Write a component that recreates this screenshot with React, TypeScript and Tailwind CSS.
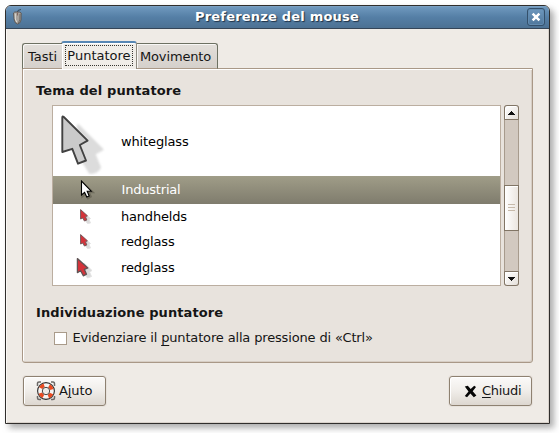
import React from 'react';

const cursorRows = [
  { name: 'whiteglass', kind: 'glass', height: 'h-[70px]', label: 'pt-[2px] tracking-[-0.13px]' },
  { name: 'Industrial', kind: 'industrial', height: 'h-[28px]', label: 'pl-[0.5px] tracking-[-0.2px]' },
  { name: 'handhelds', kind: 'small', height: 'h-[25px]', label: 'tracking-[-0.2px]' },
  { name: 'redglass', kind: 'small', height: 'h-[25px]', label: 'tracking-[-0.13px]' },
  { name: 'redglass', kind: 'medium', height: 'h-[27px]', label: 'tracking-[-0.13px]' },
];

function Cursor({ kind }: { kind: string }) {
  if (kind === 'glass') {
    return (
      <svg width="52" height="66" viewBox="0 0 52 66" className="mt-[2px] ml-[5px] shrink-0">
        <path d="M20 16L44.5 40.5L36.5 45L42 58.5Q40 64 32 64L25 53L18 48Z" fill="#dcdcdc" stroke="#dcdcdc" strokeWidth="2" strokeLinejoin="round" style={{ filter: 'blur(1px)' }} />
        <path d="M4.3 8.5Q4.3 6.8 5.8 8L29.6 31.6L21.8 36L28 51.5L20 54.7L14.3 39.8L4.3 43Z" fill="#cacaca" stroke="#424242" strokeWidth="1.9" strokeLinejoin="round" />
      </svg>
    );
  }
  if (kind === 'industrial') {
    return (
      <svg width="16" height="22" viewBox="0 0 16 22" className="ml-[26px] shrink-0">
        <path d="M3.5 4V17L6.5 14.5L9 19L11.5 17.5L9.5 13H13Z" fill="none" stroke="#555244" strokeOpacity=".5" strokeWidth="2.5" />
        <path d="M2.5 2.2V16L5.6 13.4L7.8 18L10.2 17L8.2 12.2H12.2Z" fill="#fff" stroke="#000" strokeWidth="1.1" />
      </svg>
    );
  }
  if (kind === 'small') {
    return (
      <svg width="16" height="18" viewBox="0 0 16 18" className="-mt-[2px] ml-[25px] shrink-0">
        <path d="M6 6L12.5 11.5L11 12.5L12.5 16L9.5 16.5L6 12Z" fill="#dadada" stroke="#e3e3e3" />
        <path d="M2.6 2.6V12L4.9 11L6.4 14L8.8 13L7.5 9.8L9.4 8.8Z" fill="#d5333a" stroke="#77595b" strokeWidth="1" strokeLinejoin="round" />
      </svg>
    );
  }
  return (
    <svg width="20" height="24" viewBox="0 0 20 24" className="ml-[22px] shrink-0">
      <path d="M9 7L17 14.5L14.5 16L16.5 20.5L12.5 22L8 16Z" fill="#dadada" stroke="#e3e3e3" />
      <path d="M2.4 2.6V16.6L5.6 14.8L8.3 19.8L11.5 18.2L9.4 13.4L12.8 12Z" fill="#d5333a" stroke="#5f5354" strokeWidth="1.3" strokeLinejoin="round" />
    </svg>
  );
}

function TitleBar() {
  return (
    <header className="flex h-[23px] items-center border-b border-[#354557] bg-linear-to-b from-[#729bc0] via-[#557fa6] to-[#4c7193] shadow-[inset_0_1px_0_#7ba0c2]">
      <svg width="12" height="16" viewBox="0 0 12 16" className="ml-[6px]">
        <path d="M5.5 3Q5 1 9 .5" fill="none" stroke="#33414e" strokeWidth=".9" />
        <path d="M1.5 4Q2 2.7 5 3Q8.6 2.7 9.2 4L9 11Q8 15 5.5 15Q3 14.5 2.2 11Z" fill="#a8a39d" stroke="#5b5550" strokeWidth=".9" />
        <path d="M3.3 4.5V10L4.7 13" stroke="#e2ded7" fill="none" />
        <path d="M5.5 3.5V6.5" stroke="#85685f" strokeWidth="1" />
        <path d="M8 5Q8.5 11 6.5 14" stroke="#6e6a66" fill="none" />
      </svg>
      <h1 className="flex-1 pl-[3px] text-center text-[13px] leading-[22px] font-bold tracking-[0.2px] whitespace-nowrap text-white [text-shadow:1px_1px_1px_#1e3044]">Preferenze del mouse</h1>
      <button className="mr-[4px] flex h-[18px] w-[18px] items-center justify-center rounded-[3px] border border-[#34506b] bg-linear-to-b from-[#6e98be] to-[#4f779c] shadow-[inset_0_0_0_1px_#628bb0]">
        <svg width="10" height="10" viewBox="0 0 10 10">
          <path d="M1.6 1.6L8.4 8.4M8.4 1.6L1.6 8.4" stroke="#fff" strokeWidth="2.5" />
        </svg>
      </button>
    </header>
  );
}

const tabBase = 'relative flex whitespace-nowrap border-t border-[#6d7162]';

function Tabs() {
  return (
    <nav className="relative z-10 flex h-[28px] items-end">
      <div className={`${tabBase} h-[26px] w-[40px] justify-center rounded-tl-[3px] border-l border-b border-b-[#a99887] bg-linear-to-b from-[#e3dfda] to-[#d5d0cb] pt-[4px] leading-[18px] shadow-[inset_1px_1px_0_#f8f7f5]`}>Tasti</div>
      <div className="-ml-px flex h-[28px] w-[76px] justify-center rounded-t-[3px] border-x border-t-[2px] border-x-[#8e8a80] border-t-[#5787b4] bg-[#f0ede8] pt-[2px] shadow-[inset_1px_1px_0_#fff]">
        <span className="flex h-[21px] w-[68px] justify-center border border-dotted border-[#353530] leading-[20px]">Puntatore</span>
      </div>
      <div className={`${tabBase} h-[26px] w-[81px] rounded-tr-[3px] border-r border-b border-b-[#a99887] bg-linear-to-b from-[#e3dfda] to-[#d5d0cb] pt-[4px] pl-[3px] leading-[18px] tracking-[-0.15px] shadow-[inset_1px_1px_0_#f8f7f5]`}>Movimento</div>
    </nav>
  );
}

function ScrollBar() {
  return (
    <div className="flex h-[181px] w-[15px] flex-col rounded-[3px] border-x border-[#a79b8d] bg-[#d2c9c0]">
      <div className="-mx-px flex h-[15px] shrink-0 items-center justify-center rounded-t-[3px] border border-[#817565] bg-linear-to-br from-white to-[#e5e0da] shadow-[inset_1px_1px_0_#fff]">
        <svg width="7" height="4" viewBox="0 0 7 4" shapeRendering="crispEdges"><path d="M3 0H4V1H5V2H6V3H7V4H0V3H1V2H2V1H3Z" fill="#111" /></svg>
      </div>
      <div className="h-[65px] shrink-0" />
      <div className="-mx-px flex h-[46px] shrink-0 flex-col items-center justify-center gap-[2px] border border-[#817565] bg-linear-to-r from-white to-[#ebe6e0] pb-px shadow-[inset_1px_1px_0_#fff]">
        <i className="h-px w-[7px] bg-[#c7baaa]" />
        <i className="h-px w-[7px] bg-[#c7baaa]" />
        <i className="h-px w-[7px] bg-[#c7baaa]" />
      </div>
      <div className="flex-1" />
      <div className="-mx-px flex h-[15px] shrink-0 items-center justify-center rounded-b-[3px] border border-[#817565] bg-linear-to-br from-white to-[#e5e0da] shadow-[inset_1px_1px_0_#fff]">
        <svg width="7" height="4" viewBox="0 0 7 4" shapeRendering="crispEdges"><path d="M0 0H7V1H6V2H5V3H4V4H3V3H2V2H1V1H0Z" fill="#111" /></svg>
      </div>
    </div>
  );
}

function HelpIcon() {
  return (
    <svg width="20" height="20" viewBox="0 0 20 20">
      <path d="M1.5 5V2Q1.5 1 3 1H5M15 1H17Q18.5 1 18.5 3V5M18.5 15V17Q18.5 18.5 17 18.5H15M5 18.5H3Q1.5 18.5 1.5 17V15" fill="none" stroke="#6b6967" strokeWidth="1.5" />
      <circle cx="10" cy="10" r="8.4" fill="#f6f4f2" stroke="#2d2d2d" strokeWidth="1.1" />
      <circle cx="10" cy="10" r="6" fill="none" stroke="#ea4a20" strokeWidth="3.8" strokeDasharray="4.4 5.025" transform="rotate(24 10 10)" />
      <circle cx="10" cy="10" r="3.7" fill="#efebe7" stroke="#4a4846" strokeWidth="1" />
    </svg>
  );
}

const buttonStyle = 'flex h-[30px] w-[83px] items-center rounded-[3px] border border-[#8e8171] bg-linear-to-b from-[#fbfaf9] via-[#f0ede9] to-[#ddd7d0] whitespace-nowrap shadow-[inset_1px_1px_0_#fff,0_0_0_1px_#e7e2dc]';

export default function App() {
  return (
    <div className="h-[433px] w-[559px] overflow-hidden bg-white pt-[5px] pl-[5px] font-['DejaVu_Sans',sans-serif] text-[13px] leading-[18px] text-[#151515]">
      <main className="h-[419px] w-[545px] overflow-hidden rounded-t-[6px] border border-[#302e2c] bg-[#efebe6] shadow-[4px_4px_6px_#77777799]">
        <TitleBar />
        <div className="h-[394px] px-[16px] pt-[12px] shadow-[inset_1px_0_0_#faf8f5,inset_-1px_-1px_0_#d8d1ca]">
          <Tabs />
          <section className="-mt-px h-[295px] rounded-b-[3px] border border-[#a99887] bg-[#e8e3dd] pl-[13px] shadow-[inset_1px_1px_0_#fff,inset_-1px_-1px_0_#d7cec5]">
            <h2 className="pt-[13px] font-bold tracking-[0.12px]">Tema del puntatore</h2>
            <div className="mt-[5px] ml-[16px] flex gap-[3px]">
              <div className="h-[181px] w-[449px] border border-[#bbaea0] bg-white text-black">
                {cursorRows.map((row, index) => (
                  <div key={index} className={`${row.height} flex items-center ${row.kind === 'industrial' ? 'bg-linear-to-b from-[#a09d88] to-[#7f7c6d] text-white' : ''}`}>
                    <div className="flex w-[68px] shrink-0"><Cursor kind={row.kind} /></div>
                    <span className={row.label}>{row.name}</span>
                  </div>
                ))}
              </div>
              <ScrollBar />
            </div>
            <h2 className="mt-[18px] font-bold tracking-[0.1px]">Individuazione puntatore</h2>
            <label className="mt-[7px] ml-[18px] flex h-[18px] items-center gap-[5.5px] tracking-[-0.155px] whitespace-nowrap">
              <span className="h-[13px] w-[13px] border border-[#a99b8a] bg-white" />
              <span>Evidenziare il <span className="underline underline-offset-[3px]">p</span>untatore alla pressione di «Ctrl»</span>
            </label>
          </section>
          <footer className="flex justify-between px-px pt-[13px]">
            <button className={`${buttonStyle} gap-[3px] pl-[12px]`}>
              <HelpIcon />
              <span className="tracking-[-0.1px]">A<span className="underline underline-offset-2">j</span>uto</span>
            </button>
            <button className={`${buttonStyle} gap-[5px] pl-[14px]`}>
              <svg width="13" height="13" viewBox="0 0 13 13">
                <path d="M.8 1.6L3.8 .8L6.7 4L10.2 .8L12 2L8.7 6.2L12.4 10.4L9.8 12.2L6.4 8.6L3 12.2L.8 11L4.5 6.4Z" fill="#050505" />
              </svg>
              <span className="tracking-[-0.3px]"><span className="underline underline-offset-2">C</span>hiudi</span>
            </button>
          </footer>
        </div>
      </main>
    </div>
  );
}
